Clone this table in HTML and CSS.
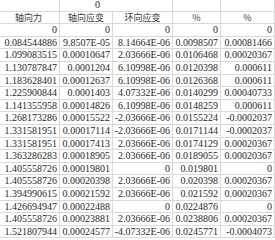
FILE: index.html
```html
<!DOCTYPE html>
<html>
<head>
<meta charset="utf-8">
<link rel="stylesheet" href="styles.css">
</head>
<body>
<div class="sheet">
  <div class="c"></div>
  <div class="c top-merge">0</div>
  <div class="c"></div>
  <div class="c"></div>

  <div class="c h">轴向力</div>
  <div class="c h">轴向应变</div>
  <div class="c h">环向应变</div>
  <div class="c h">%</div>
  <div class="c h">%</div>

  <div class="c">0</div><div class="c">0</div><div class="c">0</div><div class="c">0</div><div class="c">0</div>
  <div class="c">0.084544886</div><div class="c">9.8507E-05</div><div class="c">8.14664E-06</div><div class="c">0.0098507</div><div class="c">0.00081466</div>
  <div class="c">1.099083515</div><div class="c">0.00010647</div><div class="c">2.03666E-06</div><div class="c">0.0106468</div><div class="c">0.00020367</div>
  <div class="c">1.130787847</div><div class="c">0.0001204</div><div class="c">6.10998E-06</div><div class="c">0.0120398</div><div class="c">0.000611</div>
  <div class="c">1.183628401</div><div class="c">0.00012637</div><div class="c">6.10998E-06</div><div class="c">0.0126368</div><div class="c">0.000611</div>
  <div class="c">1.225900844</div><div class="c">0.0001403</div><div class="c">4.07332E-06</div><div class="c">0.0140299</div><div class="c">0.00040733</div>
  <div class="c">1.141355958</div><div class="c">0.00014826</div><div class="c">6.10998E-06</div><div class="c">0.0148259</div><div class="c">0.000611</div>
  <div class="c">1.268173286</div><div class="c">0.00015522</div><div class="c">-2.03666E-06</div><div class="c">0.0155224</div><div class="c">-0.0002037</div>
  <div class="c">1.331581951</div><div class="c">0.00017114</div><div class="c">-2.03666E-06</div><div class="c">0.0171144</div><div class="c">-0.0002037</div>
  <div class="c">1.331581951</div><div class="c">0.00017413</div><div class="c">2.03666E-06</div><div class="c">0.0174129</div><div class="c">0.00020367</div>
  <div class="c">1.363286283</div><div class="c">0.00018905</div><div class="c">2.03666E-06</div><div class="c">0.0189055</div><div class="c">0.00020367</div>
  <div class="c">1.405558726</div><div class="c">0.00019801</div><div class="c">0</div><div class="c">0.019801</div><div class="c">0</div>
  <div class="c">1.405558726</div><div class="c">0.00020398</div><div class="c">2.03666E-06</div><div class="c">0.020398</div><div class="c">0.00020367</div>
  <div class="c">1.394990615</div><div class="c">0.00021592</div><div class="c">2.03666E-06</div><div class="c">0.021592</div><div class="c">0.00020367</div>
  <div class="c">1.426694947</div><div class="c">0.00022488</div><div class="c">0</div><div class="c">0.0224876</div><div class="c">0</div>
  <div class="c">1.405558726</div><div class="c">0.00023881</div><div class="c">2.03666E-06</div><div class="c">0.0238806</div><div class="c">0.00020367</div>
  <div class="c">1.521807944</div><div class="c">0.00024577</div><div class="c">-4.07332E-06</div><div class="c">0.0245771</div><div class="c">-0.0004073</div>
</div>
</body>
</html>
```
FILE: styles.css
```css
html, body {
  margin: 0;
  padding: 0;
  background: #ffffff;
  overflow: hidden;
}
.sheet {
  display: grid;
  grid-template-columns: 62px 53px 60px 48px 54px;
  grid-auto-rows: 12.6px;
  margin: -1px 0 0 -2px;
  font-family: "Liberation Serif", "Noto Sans CJK SC", serif;
  font-size: 10px;
  color: #2a2a2a;
}
.c {
  box-sizing: border-box;
  border-right: 1px solid #d9d9d9;
  border-bottom: 1px solid #d9d9d9;
  text-align: right;
  padding-right: 2px;
  line-height: 11.6px;
  white-space: nowrap;
  overflow: hidden;
}
.top-merge {
  grid-column: span 2;
  text-align: left;
  padding-left: 35px;
  line-height: 12px;
}
.h {
  text-align: center;
  padding-right: 0;
  font-family: "Noto Sans CJK SC", sans-serif;
  font-size: 9px;
  color: #3a3a3a;
}
```
